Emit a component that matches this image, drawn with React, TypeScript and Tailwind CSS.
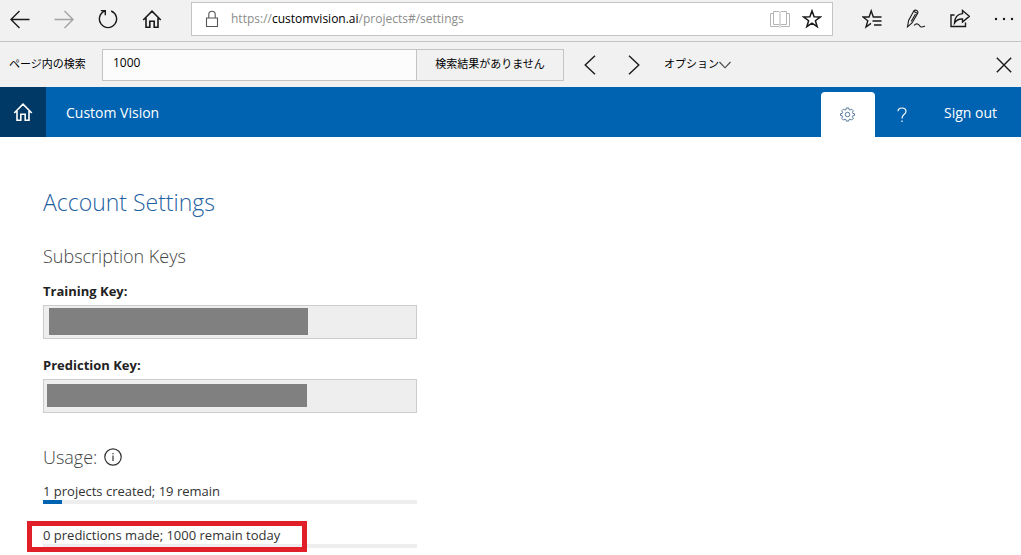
import React from 'react';

const ICON = 'fill-none stroke-current';

const HomeIcon: React.FC = () => (
  <svg viewBox="0 0 20 20" className={`h-5 w-5 ${ICON}`} strokeWidth={1.6}>
    <path d="M1.2 11 10 2.2l8.8 8.8M4 9v9.2h3.8v-6h4.4v6H16V9" />
  </svg>
);

type ToolButtonProps = {
  label: string;
  muted?: boolean;
  children: React.ReactNode;
};

const ToolButton: React.FC<ToolButtonProps> = ({ label, muted, children }) => (
  <button
    type="button"
    aria-label={label}
    className={`flex h-8 w-8 shrink-0 items-center justify-center ${muted ? 'text-[#a3a3a3]' : 'text-[#1a1a1a]'}`}
  >
    {children}
  </button>
);

/** Navigation buttons, address box and the browser actions. */
const BrowserToolbar: React.FC = () => (
  <div className="flex h-[42px] items-start border-b border-[#c4c4c4] bg-[#f1f1f1] pt-[2px] pr-px pl-1">
    <div className="mr-[23px] flex gap-3 pt-px">
      <ToolButton label="Back">
        <svg viewBox="0 0 20 20" className={`h-5 w-5 ${ICON}`} strokeWidth={1.4}>
          <path d="M19.5 10.5H1M9.5 2 1 10.5 9.5 19" />
        </svg>
      </ToolButton>
      <ToolButton label="Forward" muted>
        <svg viewBox="0 0 20 20" className={`h-5 w-5 ${ICON}`} strokeWidth={1.4}>
          <path d="M.5 10.5H19M10.5 2l8.5 8.5-8.5 8.5" />
        </svg>
      </ToolButton>
      <ToolButton label="Refresh">
        <svg viewBox="0 0 20 20" className={`h-5 w-5 ${ICON}`} strokeWidth={1.4}>
          <path d="M13.2 2A8.6 8.6 0 1 1 6.8 2M2.8 1.6h4.5v4.6" />
        </svg>
      </ToolButton>
      <ToolButton label="Home">
        <HomeIcon />
      </ToolButton>
    </div>

    <div className="flex h-[34px] flex-1 items-center border border-[#c4c4c4] bg-white text-xs">
      <svg viewBox="0 0 14 18" className={`ml-[13px] h-[18px] w-[14px] text-[#555] ${ICON}`} strokeWidth={1.1}>
        <path d="M1.5 8h11v8.5h-11zM3.8 8V4.5a3.2 3.2 0 0 1 6.4 0V8" />
      </svg>
      <div className="ml-3 flex-1 text-[#8c8c8c]">
        https://<span className="text-black">customvision.ai</span>/projects#/settings
      </div>
      <button type="button" aria-label="Reading view" className="flex h-8 w-8 items-center justify-center text-[#b5b5b5]">
        <svg viewBox="0 0 20 18" className={`h-[18px] w-5 ${ICON}`} strokeWidth={1}>
          <path d="M3.5 1.5H9l1 1 1-1h5.5v13H11l-1 1-1-1H3.5zM10 2.5v13M3.5 3.5h-3v13H9l1 1 1-1h8.5v-13h-3" />
        </svg>
      </button>
      <button type="button" aria-label="Add to favorites" className="mr-1 flex h-8 w-8 items-center justify-center text-[#1a1a1a]">
        <svg viewBox="0 0 20 20" className={`h-5 w-5 ${ICON}`} strokeWidth={1.5}>
          <path d="M10 1.8l2.1 5.9 6.3.2-5 3.8 1.8 6-5.2-3.6-5.2 3.6 1.8-6-5-3.8 6.3-.2z" />
        </svg>
      </button>
    </div>

    <div className="ml-[23px] flex gap-3 pt-px">
      <ToolButton label="Hub">
        <svg viewBox="0 0 20 20" className={`h-5 w-5 ${ICON}`} strokeWidth={1.4}>
          <path d="M19.5 8h-8.2L9.2 1.8 7.1 8H1l4.8 3.8L4 18l5-3.6M10.5 12h9M12 16h7.5" />
        </svg>
      </ToolButton>
      <ToolButton label="Add notes">
        <svg viewBox="0 0 20 20" className={`h-5 w-5 ${ICON}`} strokeWidth={1.1}>
          <path d="M1.5 17.8 2.6 11.500 7.600 2.200Q9 .6 10.800 1.500 12.400 2.600 11.600 4.400L6 14zM7.600 2.200l4 2.200M9.500 5 5.200 12.500M8 16.500q2-2.200 3.500-1.500T14 17.300t5-.3" />
        </svg>
      </ToolButton>
      <ToolButton label="Share">
        <svg viewBox="0 0 20 20" className={`h-5 w-5 ${ICON}`} strokeWidth={1.4}>
          <path d="M4.500 6H1v11.500h14.500v-4M12.500 1.500l6.800 5.800-6.800 5.700v-3Q7.500 9.500 4.500 14 4.800 5.500 12.500 4.600z" />
        </svg>
      </ToolButton>
      <ToolButton label="More">
        <svg viewBox="0 0 20 20" className="h-5 w-5 fill-current">
          <circle cx="2" cy="10" r="1.2" />
          <circle cx="10" cy="10" r="1.2" />
          <circle cx="18" cy="10" r="1.2" />
        </svg>
      </ToolButton>
    </div>
  </div>
);

const FindBar: React.FC = () => (
  <div className="flex h-[45px] items-center bg-[#f1f1f1] pr-px pl-[9px] text-black">
    <label htmlFor="find" className="w-[93px] shrink-0 text-[11px]">
      ページ内の検索
    </label>
    <input
      id="find"
      type="text"
      defaultValue="1000"
      className="h-8 w-[314px] min-w-0 border border-r-0 border-[#c4c4c4] bg-[#fcfcfc] px-[10px] pb-1 text-xs outline-none"
    />
    <button type="button" className="h-8 w-[148px] shrink-0 border border-[#c4c4c4] text-[11px]">
      検索結果がありません
    </button>
    <div className="ml-[10px] flex gap-3">
      <ToolButton label="Previous result">
        <svg viewBox="0 0 12 20" className={`h-5 w-3 ${ICON}`} strokeWidth={1.4}>
          <path d="M11 .8 1.2 10 11 19.2" />
        </svg>
      </ToolButton>
      <ToolButton label="Next result">
        <svg viewBox="0 0 12 20" className={`h-5 w-3 ${ICON}`} strokeWidth={1.4}>
          <path d="M1 .8 10.8 10 1 19.2" />
        </svg>
      </ToolButton>
    </div>
    <button type="button" className="ml-[14px] flex shrink-0 items-center text-[11px]">
      オプション
      <svg viewBox="0 0 12 8" className={`h-2 w-3 text-[#444] ${ICON}`} strokeWidth={1.1}>
        <path d="M.5 1 6 6.8 11.5 1" />
      </svg>
    </button>
    <div className="ml-auto">
      <ToolButton label="Close">
        <svg viewBox="0 0 16 16" className={`h-4 w-4 ${ICON}`} strokeWidth={1.4}>
          <path d="m.8.8 14.4 14.4M15.2.8.8 15.2" />
        </svg>
      </ToolButton>
    </div>
  </div>
);

const SiteHeader: React.FC = () => (
  <header className="flex h-[50px] bg-[#0063b1] text-sm text-white">
    <a href="#" aria-label="Home" className="flex w-[46px] items-center justify-center bg-[#003966]">
      <HomeIcon />
    </a>
    <a href="#/projects" className="ml-5 flex items-center pt-px">
      Custom Vision
    </a>
    <nav className="ml-auto flex items-end">
      <a href="#/settings" aria-label="Settings" className="flex h-[45px] w-[54px] items-center justify-center rounded-t bg-white text-[#4d7094]">
        <svg viewBox="0 0 16 16" className={`h-[15px] w-[15px] ${ICON}`} strokeWidth={1}>
          <path d="M6.700 1h2.600l.400 1.900 1 .400 1.700-1 1.800 1.800-1 1.700.400 1 1.900.400v1.800l-1.900.400-.400 1 1 1.700-1.800 1.800-1.700-1-1 .400L9.300 15H6.700l-.400-1.700-1-.400-1.700 1-1.800-1.800 1-1.700-.400-1L.500 9V7.200l1.900-.400.400-1-1-1.700 1.800-1.800 1.700 1 1-.400z" />
          <circle cx="8" cy="8" r="2.4" />
        </svg>
      </a>
      <a href="#/help" aria-label="Help" className="flex h-[45px] w-[54px] items-center justify-center">
        <svg viewBox="0 0 10 16" className={`h-4 w-[10px] ${ICON}`} strokeWidth={1.2}>
          <path d="M1 4.2Q1.2 1 5 1t4 3.2Q9 6 7 7.4T5 11.5M5 13.5V15" />
        </svg>
      </a>
      <a href="#/signout" className="flex h-full items-center pt-px pr-6 pl-[15px]">
        Sign out
      </a>
    </nav>
  </header>
);

type KeyFieldProps = {
  id: string;
  label: string;
  mask: string;
};

const KeyField: React.FC<KeyFieldProps> = ({ id, label, mask }) => (
  <div>
    <label htmlFor={id} className="block text-[13px] leading-5 font-bold text-[#222]">
      {label}
    </label>
    <div className="relative mt-1">
      <input id={id} type="text" readOnly className="block h-[34px] w-full border border-[#ccc] bg-[#eee] px-2 outline-none" />
      <div className={`absolute bg-[#808080] ${mask}`} />
    </div>
  </div>
);

type UsageProps = {
  text: string;
  percent: number;
  highlighted?: boolean;
};

const Usage: React.FC<UsageProps> = ({ text, percent, highlighted }) => (
  <div className="relative">
    <p className="text-[13px] leading-[18px] text-[#333]">{text}</p>
    <div className="h-1 bg-[#eee]">
      <div className="h-full bg-[#0063b1]" style={{ width: `${percent}%` }} />
    </div>
    {highlighted && <div className="absolute -top-[5px] -left-4 h-[31px] w-[280px] border-[5px] border-[#e01f29]" />}
  </div>
);

const App: React.FC = () => (
  <div className="min-h-screen bg-white font-['Open_Sans','Noto_Sans_CJK_JP',sans-serif]">
    <BrowserToolbar />
    <FindBar />
    <SiteHeader />
    <main className="max-w-[417px] pt-[50px] pl-[43px]">
      <h1 className="text-[23px] leading-[30px] font-light text-[#1f62a0]">Account Settings</h1>
      <h2 className="mt-[27px] text-lg leading-6 font-light text-[#444]">Subscription Keys</h2>
      <div className="mt-[13px] flex flex-col gap-4">
        <KeyField id="training-key" label="Training Key:" mask="top-[3px] left-[6px] h-[27px] w-[259px]" />
        <KeyField id="prediction-key" label="Prediction Key:" mask="top-[5px] left-1 h-[23px] w-[260px]" />
      </div>
      <h2 className="mt-8 flex items-center gap-[7px] text-lg leading-6 font-light text-[#444]">
        Usage:
        <svg viewBox="0 0 18 18" className={`h-[18px] w-[18px] text-[#333] ${ICON}`} strokeWidth={1.2}>
          <circle cx="9" cy="9" r="8.2" />
          <path d="M9 7.5V13M9 5v1.3" />
        </svg>
      </h2>
      <div className="mt-[13px] flex flex-col gap-[22px]">
        <Usage text="1 projects created; 19 remain" percent={5} />
        <Usage text="0 predictions made; 1000 remain today" percent={0} highlighted />
      </div>
    </main>
  </div>
);

export default App;
